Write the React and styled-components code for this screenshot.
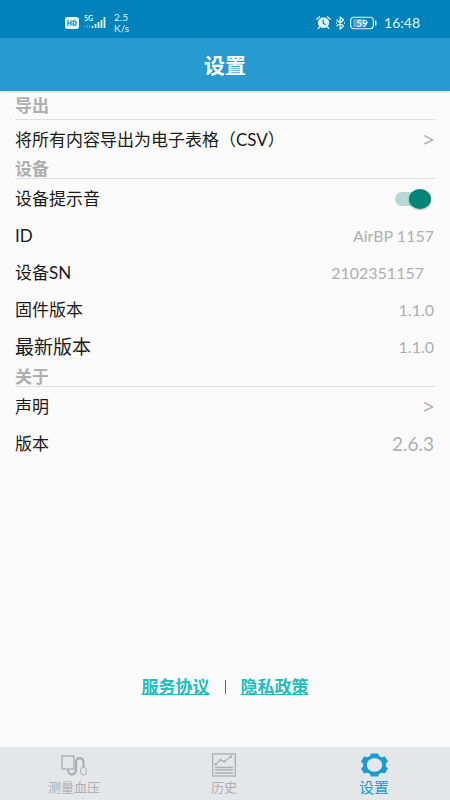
import React, { useState } from "react";
import styled, { createGlobalStyle } from "styled-components";

const GlobalStyle = createGlobalStyle`
  * { box-sizing: border-box; }
  body {
    margin: 0;
    background: #fafafa;
    color: #1b1b1b;
    font-family: Lato, "Noto Sans CJK SC", sans-serif;
  }
`;

const Screen = styled.div`
  display: flex;
  flex-direction: column;
  min-height: 100vh;
`;

const StatusBar = styled.div`
  display: flex;
  align-items: center;
  justify-content: space-between;
  height: 38px;
  padding: 7px 30px 0 65px;
  background: #0082bb;
  color: #e2f4fb;
`;

const StatusGroup = styled.div`
  display: flex;
  align-items: center;
  gap: ${(p) => p.$gap}px;
`;

const Speed = styled.div`
  margin-left: 2px;
  font-size: 10px;
  line-height: 11px;
`;

const Clock = styled.time`
  margin-left: 3px;
  font-size: 14px;
  line-height: 18px;
`;

const TitleBar = styled.header`
  display: flex;
  align-items: center;
  justify-content: center;
  height: 53px;
  background: #279ad2;
  box-shadow: 0 1px 2px rgba(0, 0, 0, 0.16);
`;

const Title = styled.h1`
  margin: 0;
  color: #fff;
  font-size: 21px;
  line-height: 28px;
  font-weight: 700;
`;

const Content = styled.main`
  flex: 1;
  display: flex;
  flex-direction: column;
  padding: 8px 15px 0;
`;

const SectionTitle = styled.h2`
  margin: 0;
  height: ${(p) => (p.$first ? 21 : 20)}px;
  border-bottom: 1px solid #dedede;
  color: #aeaeb0;
  font-size: 17px;
  line-height: ${(p) => (p.$first ? 13 : 19)}px;
  font-weight: 700;
`;

const Group = styled.div`
  padding: 1px 0;
`;

const Row = styled.div`
  display: flex;
  align-items: center;
  justify-content: space-between;
  width: 100%;
  height: ${(p) => (p.$large ? 38 : 37)}px;
  padding: 0;
  border: 0;
  background: none;
  color: inherit;
  font-family: inherit;
  font-size: ${(p) => (p.$large ? 19 : 17)}px;
  line-height: 24px;
  text-align: left;
`;

const Value = styled.span`
  padding-right: ${(p) => (p.$inset ? 11 : 1)}px;
  color: #aeaeb0;
  font-size: ${(p) => (p.$large ? 19 : 16)}px;
`;

const Chevron = styled.span`
  padding-right: 1px;
  color: #aeaeb0;
  font-family: "Noto Sans", sans-serif;
  font-size: 19px;
`;

const Switch = styled.input`
  appearance: none;
  display: flex;
  align-items: center;
  width: 36px;
  height: 14px;
  margin: 0 4px 0 0;
  border-radius: 7px;
  background: ${(p) => (p.checked ? "#b4dad5" : "#c4c4c4")};
  cursor: pointer;

  &::before {
    content: "";
    width: 22px;
    height: 20px;
    flex: none;
    margin-left: ${(p) => (p.checked ? "auto" : "0")};
    border-radius: 50%;
    background: ${(p) => (p.checked ? "#008577" : "#f4f4f4")};
    box-shadow: 0 1px 2px rgba(0, 0, 0, 0.3);
  }
`;

const Legal = styled.div`
  display: flex;
  align-items: center;
  justify-content: center;
  gap: 15px;
  margin-top: auto;
  padding: 24px 0 48px;
`;

const LegalLink = styled.a`
  color: #20bdbd;
  font-size: 17px;
  line-height: 24px;
  font-weight: 700;
  text-decoration: underline;
  text-underline-offset: 1px;
  text-decoration-thickness: 1px;
`;

const Divider = styled.span`
  width: 1px;
  height: 14px;
  background: #666;
`;

const TabBar = styled.nav`
  display: grid;
  grid-template-columns: repeat(3, 1fr);
  height: 53px;
  background: #e5e6e8;
`;

const Tab = styled.button`
  display: flex;
  flex-direction: column;
  align-items: center;
  justify-content: flex-end;
  gap: 1px;
  padding: 0 2px 4px 0;
  border: 0;
  background: none;
  color: ${(p) => (p.$active ? "#1b9ad6" : "#adaeb0")};
  font-family: inherit;
  font-size: ${(p) => (p.$active ? 15 : 13)}px;
  line-height: 18px;
`;

const HdIcon = () => (
  <svg width="14" height="12" viewBox="0 0 14 12" aria-hidden="true">
    <rect width="14" height="12" rx="2.5" fill="#e2f4fb" />
    <path d="M3 3.3v5.4M6 3.3v5.4M3 6h3M8.2 3.8v4.4h1c2.6 0 2.6-4.4 0-4.4z" fill="none" stroke="#0082bb" strokeWidth="1.1" />
  </svg>
);

const SignalText = styled.text`
  font-size: 7px;
  font-weight: 700;
  fill: #e2f4fb;
`;

const SignalIcon = () => (
  <svg width="23" height="15" viewBox="0 0 23 15" aria-hidden="true">
    <SignalText x="0" y="6">5G</SignalText>
    <path d="M1 10v3M3.5 10v3M5.5 10v3" stroke="#e2f4fb" opacity=".3" />
    <path d="M8.500 11v2M11.500 9v4M14.500 7v6M17.500 5v8M20.500 2v11" stroke="#e2f4fb" strokeWidth="1.8" />
  </svg>
);

const AlarmIcon = () => (
  <svg width="15" height="13" viewBox="0 0 15 13" aria-hidden="true">
    <ellipse cx="7.5" cy="6.7" rx="5.7" ry="5.4" fill="#e2f4fb" />
    <path d="M.8 3.2 3.6.8M14.2 3.2 11.4.8M3.5 11l-1.300 1.500M11.500 11l1.300 1.500" stroke="#e2f4fb" strokeWidth="1.300" strokeLinecap="round" />
    <path d="M7.2 3.5v3.7l2.5 1.6" fill="none" stroke="#0082bb" strokeWidth="1.2" />
  </svg>
);

const BluetoothIcon = () => (
  <svg width="11" height="14" viewBox="0 0 11 14" aria-hidden="true">
    <path d="M1.500 3.800 8.500 10 5.200 13V1l3.300 3-7 6.200" fill="none" stroke="#e2f4fb" strokeWidth="1.300" strokeLinejoin="round" />
    <path d="M1 7h1M9 7h1" stroke="#e2f4fb" strokeWidth="1.300" />
  </svg>
);

const BatteryText = styled.text`
  font-size: 10px;
  font-weight: 700;
  fill: #e2f4fb;
  text-anchor: middle;
`;

const BatteryIcon = () => (
  <svg width="27" height="14" viewBox="0 0 27 14" role="img" aria-label="59%">
    <rect x=".7" y="1.200" width="22.600" height="11.600" rx="3" fill="none" stroke="#e2f4fb" strokeWidth="1.100" />
    <rect x="3" y="3" width="12" height="8" rx="1" fill="#e2f4fb" opacity=".35" />
    <BatteryText x="12" y="10.500">59</BatteryText>
    <path d="M25.700 4.500v5" stroke="#e2f4fb" strokeWidth="1.500" />
  </svg>
);

const MonitorIcon = () => (
  <svg width="26" height="22" viewBox="0 0 26 22" fill="none" stroke="currentColor" aria-hidden="true">
    <rect x="1" y="1" width="12" height="13" strokeWidth="1.400" />
    <path d="M7 14.500c0 6.500 8 6.500 8 0V8c0-6.500 7.500-6.500 7.500 0v4" strokeWidth="2.200" />
    <ellipse cx="22.500" cy="16" rx="3" ry="4" strokeWidth="1" />
  </svg>
);

const HistoryIcon = () => (
  <svg width="24" height="24" viewBox="0 0 24 24" fill="none" stroke="currentColor" aria-hidden="true">
    <rect x=".7" y="1" width="22.600" height="22" strokeWidth="1.300" />
    <path d="M3.500 11.500 8.500 7l4 1.500L19 3.500" strokeWidth="1.100" />
    <path d="M3 14.500h18M3 17h18M3 20h18" strokeWidth="1.300" />
    <g fill="currentColor" stroke="none">
      <circle cx="3.800" cy="11.300" r="1.200" />
      <circle cx="8.500" cy="7" r="1.200" />
      <circle cx="12.500" cy="8.500" r="1.200" />
      <circle cx="19" cy="3.800" r="1.200" />
    </g>
  </svg>
);

const GearIcon = () => (
  <svg width="27" height="24" viewBox="0 0 27 24" aria-hidden="true">
    <path
      fill="currentColor"
      fillRule="evenodd"
      d="M9.800.5h7.400l.8 2.500 2.800 1.300 3.200-.9 3 5-2.100 2.200v2.800l2.100 2.200-3 5-3.200-.9-2.800 1.300-.8 2.500H9.800L9 21l-2.800-1.300-3.200.9-3-5 2.100-2.200v-2.800L0 8.400l3-5 3.200.9L9 3zM13.500 5.300c-4.500 0-7.700 3-7.700 6.700s3.200 6.700 7.700 6.700 7.700-3 7.700-6.700-3.200-6.700-7.700-6.700z"
    />
  </svg>
);

const tabs = [
  { label: "测量血压", Icon: MonitorIcon },
  { label: "历史", Icon: HistoryIcon },
  { label: "设置", Icon: GearIcon, active: true },
];

export default function App() {
  const [sound, setSound] = useState(true);
  return (
    <Screen>
      <GlobalStyle />
      <StatusBar>
        <StatusGroup $gap={5}>
          <HdIcon />
          <SignalIcon />
          <Speed>2.5<br />K/s</Speed>
        </StatusGroup>
        <StatusGroup $gap={4}>
          <AlarmIcon />
          <BluetoothIcon />
          <BatteryIcon />
          <Clock>16:48</Clock>
        </StatusGroup>
      </StatusBar>
      <TitleBar>
        <Title>设置</Title>
      </TitleBar>
      <Content>
        <SectionTitle $first>导出</SectionTitle>
        <Group>
          <Row as="button" type="button">将所有内容导出为电子表格（CSV）<Chevron>&gt;</Chevron></Row>
        </Group>
        <SectionTitle>设备</SectionTitle>
        <Group>
          <Row>
            <label htmlFor="sound">设备提示音</label>
            <Switch id="sound" type="checkbox" role="switch" checked={sound} onChange={(e) => setSound(e.target.checked)} />
          </Row>
          <Row>ID<Value>AirBP 1157</Value></Row>
          <Row>设备SN<Value $inset>2102351157</Value></Row>
          <Row>固件版本<Value>1.1.0</Value></Row>
          <Row $large>最新版本<Value>1.1.0</Value></Row>
        </Group>
        <SectionTitle>关于</SectionTitle>
        <Group>
          <Row as="button" type="button">声明<Chevron>&gt;</Chevron></Row>
          <Row>版本<Value $large>2.6.3</Value></Row>
        </Group>
        <Legal>
          <LegalLink href="#terms">服务协议</LegalLink>
          <Divider />
          <LegalLink href="#privacy">隐私政策</LegalLink>
        </Legal>
      </Content>
      <TabBar>
        {tabs.map(({ label, Icon, active }) => (
          <Tab key={label} type="button" $active={active} aria-current={active ? "page" : undefined}>
            <Icon />
            {label}
          </Tab>
        ))}
      </TabBar>
    </Screen>
  );
}
